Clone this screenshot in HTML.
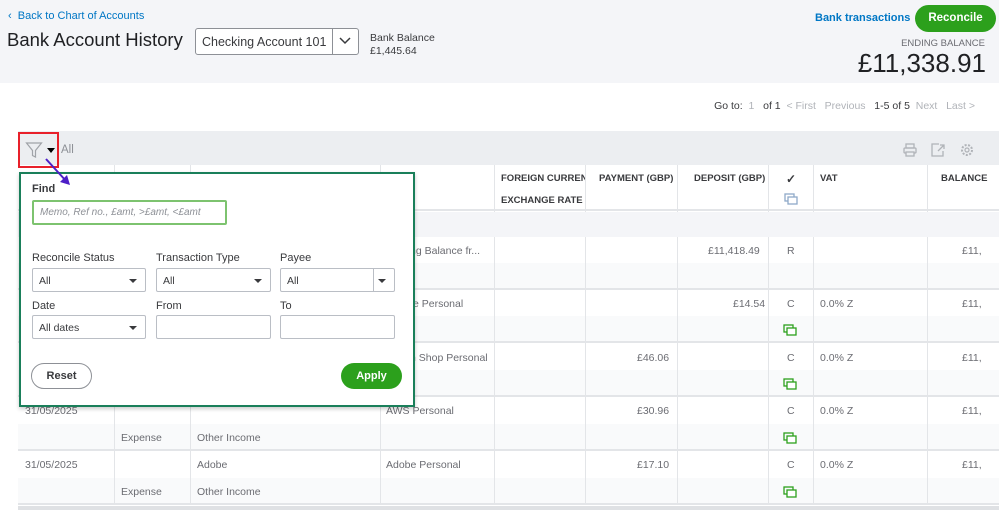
<!DOCTYPE html>
<html><head><meta charset="utf-8"><style>
*{box-sizing:border-box;margin:0;padding:0}
body{width:999px;height:510px;overflow:hidden;background:#fff;font-family:"Liberation Sans",sans-serif;color:#393a3d;position:relative;font-size:11px}
.a{position:absolute}
.hdr{left:0;top:0;width:999px;height:83px;background:#f4f5f8}
.tb{left:18px;top:131px;width:981px;height:34px;background:#eceef1}
.th{left:18px;top:165px;width:981px;height:46px;background:#fff;border-bottom:2px solid #e3e5e8}
.gb{left:18px;top:212px;width:981px;height:25px;background:#f4f5f8}
.vl{position:absolute;top:165px;width:1px;height:340px;background:#e3e5e8}
.hc{position:absolute;top:174px;font-weight:bold;font-size:9.5px;color:#393a3d;line-height:22px}
.r1{position:absolute;left:18px;width:981px;height:27px;background:#fff}
.r2{position:absolute;left:18px;width:981px;height:27px;background:#f9fafb;border-bottom:2px solid #e3e5e8}
.t{position:absolute;font-size:10.5px;color:#6b6c72}
.lbl{position:absolute;font-size:11px;color:#393a3d}
.sel{position:absolute;height:24px;border:1px solid #babec5;border-radius:2px;background:#fff;font-size:10.5px;padding:6px 6px;color:#393a3d}
.sel i{position:absolute;right:8px;top:10px;border-left:4px solid transparent;border-right:4px solid transparent;border-top:4px solid #393a3d}
.cp{position:absolute}
</style></head><body>
<div class="a hdr"></div>
<div class="a" style="left:8px;top:10px;color:#0077c5;font-size:11px">&#8249;&nbsp; Back to Chart of Accounts</div>
<div class="a" style="left:7px;top:29px;font-size:18.5px;color:#202124">Bank Account History</div>
<div class="a" style="left:195px;top:28px;width:164px;height:27px;border:1px solid #8d9096;border-radius:3px;background:#fff;font-size:12.5px;padding:6px 6px">Checking Account 101<div class="a" style="left:136px;top:0;width:1px;height:25px;background:#8d9096"></div><svg class="a" style="left:142px;top:7px" width="14" height="10"><path d="M2 2l5 5 5-5" fill="none" stroke="#393a3d" stroke-width="1.5"/></svg></div>
<div class="a" style="left:370px;top:32px;font-size:10.5px;line-height:13px">Bank Balance<br>£1,445.64</div>
<div class="a" style="left:815px;top:12px;color:#0077c5;font-weight:bold;font-size:11px">Bank transactions</div>
<div class="a" style="left:915px;top:5px;width:81px;height:27px;border-radius:14px;background:#2ca01c;color:#fff;font-weight:bold;font-size:11.5px;text-align:center;line-height:27px">Reconcile</div>
<div class="a" style="right:14px;top:38px;font-size:9.5px;color:#6b6c72">ENDING BALANCE</div>
<div class="a" style="right:13px;top:48px;font-size:26px;color:#202124">£11,338.91</div>
<div class="a" style="right:24px;top:100px;font-size:10.5px;white-space:nowrap">Go to: &nbsp;<span style="color:#b0b3b8">1</span> &nbsp; of 1 &nbsp;<span style="color:#b0b3b8">&lt; First &nbsp; Previous</span> &nbsp; 1-5 of 5 &nbsp;<span style="color:#b0b3b8">Next &nbsp; Last &gt;</span></div>

<div class="a tb"></div>
<div class="a th"></div>
<div class="a gb"></div>
<div class="r1" style="top:237px"></div><div class="r2" style="top:263px"></div>
<div class="r1" style="top:290px"></div><div class="r2" style="top:316px"></div>
<div class="r1" style="top:344px"></div><div class="r2" style="top:370px"></div>
<div class="r1" style="top:397px"></div><div class="r2" style="top:424px"></div>
<div class="r1" style="top:451px"></div><div class="r2" style="top:478px"></div>
<div class="a" style="left:18px;top:506px;width:981px;height:4px;background:#dfe1e4"></div>
<div class="vl" style="left:114px"></div><div class="vl" style="left:190px"></div><div class="vl" style="left:380px"></div><div class="vl" style="left:494px"></div><div class="vl" style="left:585px"></div><div class="vl" style="left:677px"></div><div class="vl" style="left:768px"></div><div class="vl" style="left:813px"></div><div class="vl" style="left:927px"></div>
<div class="gb a" style="left:494px;top:212px;width:505px"></div>

<div class="hc" style="left:501px;width:84px;overflow:hidden;white-space:nowrap;top:168px;line-height:22px">FOREIGN CURRENCY<br>EXCHANGE RATE</div>
<div class="hc" style="left:599px;top:168px">PAYMENT (GBP)</div>
<div class="hc" style="left:694px;top:168px">DEPOSIT (GBP)</div>
<div class="hc" style="left:786px;top:168px;font-size:12px">&#10003;</div>
<svg class="a" style="left:784px;top:193px" width="15" height="13"><rect x="1" y="1" width="9" height="7" fill="none" stroke="#8ea9c8" stroke-width="1.3"/><rect x="4" y="4" width="9" height="7" fill="#fff" stroke="#8ea9c8" stroke-width="1.3"/></svg>
<div class="hc" style="left:820px;top:168px">VAT</div>
<div class="hc" style="left:941px;top:168px">BALANCE</div>
<svg class="a" style="left:902px;top:142px" width="16" height="16"><rect x="4" y="2" width="8" height="4" fill="none" stroke="#b0b3b8" stroke-width="1.3"/><rect x="2" y="6" width="12" height="5" rx="1" fill="none" stroke="#b0b3b8" stroke-width="1.3"/><rect x="4" y="10" width="8" height="4" fill="#eceef1" stroke="#b0b3b8" stroke-width="1.3"/></svg>
<svg class="a" style="left:930px;top:142px" width="16" height="16"><path d="M9 2H2v12h11V9M8 9l6-6M10 3h4v4" fill="none" stroke="#b0b3b8" stroke-width="1.3"/></svg>
<svg class="a" style="left:959px;top:142px" width="16" height="16"><circle cx="8" cy="8" r="5" fill="none" stroke="#b0b3b8" stroke-width="2" stroke-dasharray="2 1.5"/><circle cx="8" cy="8" r="2" fill="none" stroke="#b0b3b8" stroke-width="1.2"/></svg>

<div class="t" style="left:410px;top:245px">ng Balance fr...</div>
<div class="t" style="left:708px;top:245px">£11,418.49</div><div class="t" style="left:787px;top:245px">R</div><div class="t" style="left:962px;top:245px">£11,</div>
<div class="t" style="left:413px;top:298px">e Personal</div>
<div class="t" style="left:733px;top:298px">£14.54</div><div class="t" style="left:787px;top:298px">C</div><div class="t" style="left:820px;top:298px">0.0% Z</div><div class="t" style="left:962px;top:298px">£11,</div>
<svg class="cp" style="left:783px;top:324px" width="15" height="13"><rect x="1" y="1" width="9" height="7" fill="none" stroke="#2ca01c" stroke-width="1.3"/><rect x="4" y="4" width="9" height="7" fill="#fff" stroke="#2ca01c" stroke-width="1.3"/></svg>
<div class="t" style="left:410px;top:352px">n Shop Personal</div>
<div class="t" style="left:637px;top:352px">£46.06</div><div class="t" style="left:787px;top:352px">C</div><div class="t" style="left:820px;top:352px">0.0% Z</div><div class="t" style="left:962px;top:352px">£11,</div>
<svg class="cp" style="left:783px;top:378px" width="15" height="13"><rect x="1" y="1" width="9" height="7" fill="none" stroke="#2ca01c" stroke-width="1.3"/><rect x="4" y="4" width="9" height="7" fill="#fff" stroke="#2ca01c" stroke-width="1.3"/></svg>
<div class="t" style="left:25px;top:405px">31/05/2025</div><div class="t" style="left:386px;top:405px">AWS Personal</div>
<div class="t" style="left:637px;top:405px">£30.96</div><div class="t" style="left:787px;top:405px">C</div><div class="t" style="left:820px;top:405px">0.0% Z</div><div class="t" style="left:962px;top:405px">£11,</div>
<div class="t" style="left:121px;top:432px">Expense</div><div class="t" style="left:197px;top:432px">Other Income</div>
<svg class="cp" style="left:783px;top:432px" width="15" height="13"><rect x="1" y="1" width="9" height="7" fill="none" stroke="#2ca01c" stroke-width="1.3"/><rect x="4" y="4" width="9" height="7" fill="#fff" stroke="#2ca01c" stroke-width="1.3"/></svg>
<div class="t" style="left:25px;top:459px">31/05/2025</div><div class="t" style="left:197px;top:459px">Adobe</div><div class="t" style="left:386px;top:459px">Adobe Personal</div>
<div class="t" style="left:637px;top:459px">£17.10</div><div class="t" style="left:787px;top:459px">C</div><div class="t" style="left:820px;top:459px">0.0% Z</div><div class="t" style="left:962px;top:459px">£11,</div>
<div class="t" style="left:121px;top:486px">Expense</div><div class="t" style="left:197px;top:486px">Other Income</div>
<svg class="cp" style="left:783px;top:486px" width="15" height="13"><rect x="1" y="1" width="9" height="7" fill="none" stroke="#2ca01c" stroke-width="1.3"/><rect x="4" y="4" width="9" height="7" fill="#fff" stroke="#2ca01c" stroke-width="1.3"/></svg>

<div class="a" style="left:18px;top:132px;width:41px;height:36px;border:2px solid #e8202a"></div>
<svg class="a" style="left:25px;top:141px" width="18" height="18"><path d="M1.5 2h15L10.5 9.5V16l-3-1.5V9.5z" fill="none" stroke="#a0a3a8" stroke-width="1.2"/></svg>
<div class="a" style="left:47px;top:148px;border-left:4px solid transparent;border-right:4px solid transparent;border-top:5px solid #000"></div>
<div class="a" style="left:61px;top:144px;color:#8d9096;font-size:11.5px">All</div>

<div class="a" style="left:19px;top:172px;width:396px;height:235px;background:#fff;border:2px solid #1a7f5a;box-shadow:0 2px 4px rgba(0,0,0,.2)"></div>
<div class="lbl" style="left:32px;top:183px;font-weight:bold">Find</div>
<div class="a" style="left:32px;top:200px;width:195px;height:25px;border:2px solid #7dc36f;border-radius:2px;font-size:10px;font-style:italic;color:#8d9096;padding:5px 6px">Memo, Ref no., £amt, &gt;£amt, &lt;£amt</div>
<div class="lbl" style="left:32px;top:252px">Reconcile Status</div>
<div class="lbl" style="left:156px;top:252px">Transaction Type</div>
<div class="lbl" style="left:280px;top:252px">Payee</div>
<div class="sel" style="left:32px;top:268px;width:114px">All<i></i></div>
<div class="sel" style="left:156px;top:268px;width:115px">All<i></i></div>
<div class="sel" style="left:280px;top:268px;width:115px">All<i></i><div class="a" style="left:92px;top:0;width:1px;height:22px;background:#babec5"></div></div>
<div class="lbl" style="left:32px;top:300px">Date</div>
<div class="lbl" style="left:156px;top:300px">From</div>
<div class="lbl" style="left:280px;top:300px">To</div>
<div class="sel" style="left:32px;top:315px;width:114px">All dates<i></i></div>
<div class="sel" style="left:156px;top:315px;width:115px"></div>
<div class="sel" style="left:280px;top:315px;width:115px"></div>
<div class="a" style="left:31px;top:363px;width:61px;height:26px;border:1px solid #8d9096;border-radius:13px;text-align:center;line-height:24px;font-size:11px;font-weight:bold;color:#393a3d">Reset</div>
<div class="a" style="left:341px;top:363px;width:61px;height:26px;border-radius:13px;background:#2ca01c;text-align:center;line-height:26px;font-size:11px;font-weight:bold;color:#fff">Apply</div>

<svg class="a" style="left:40px;top:155px" width="35" height="35"><path d="M6 4L27 27" stroke="#4d1fc7" stroke-width="2"/><path d="M30 30l-10-3 7-7z" fill="#4d1fc7"/></svg>
</body></html>
